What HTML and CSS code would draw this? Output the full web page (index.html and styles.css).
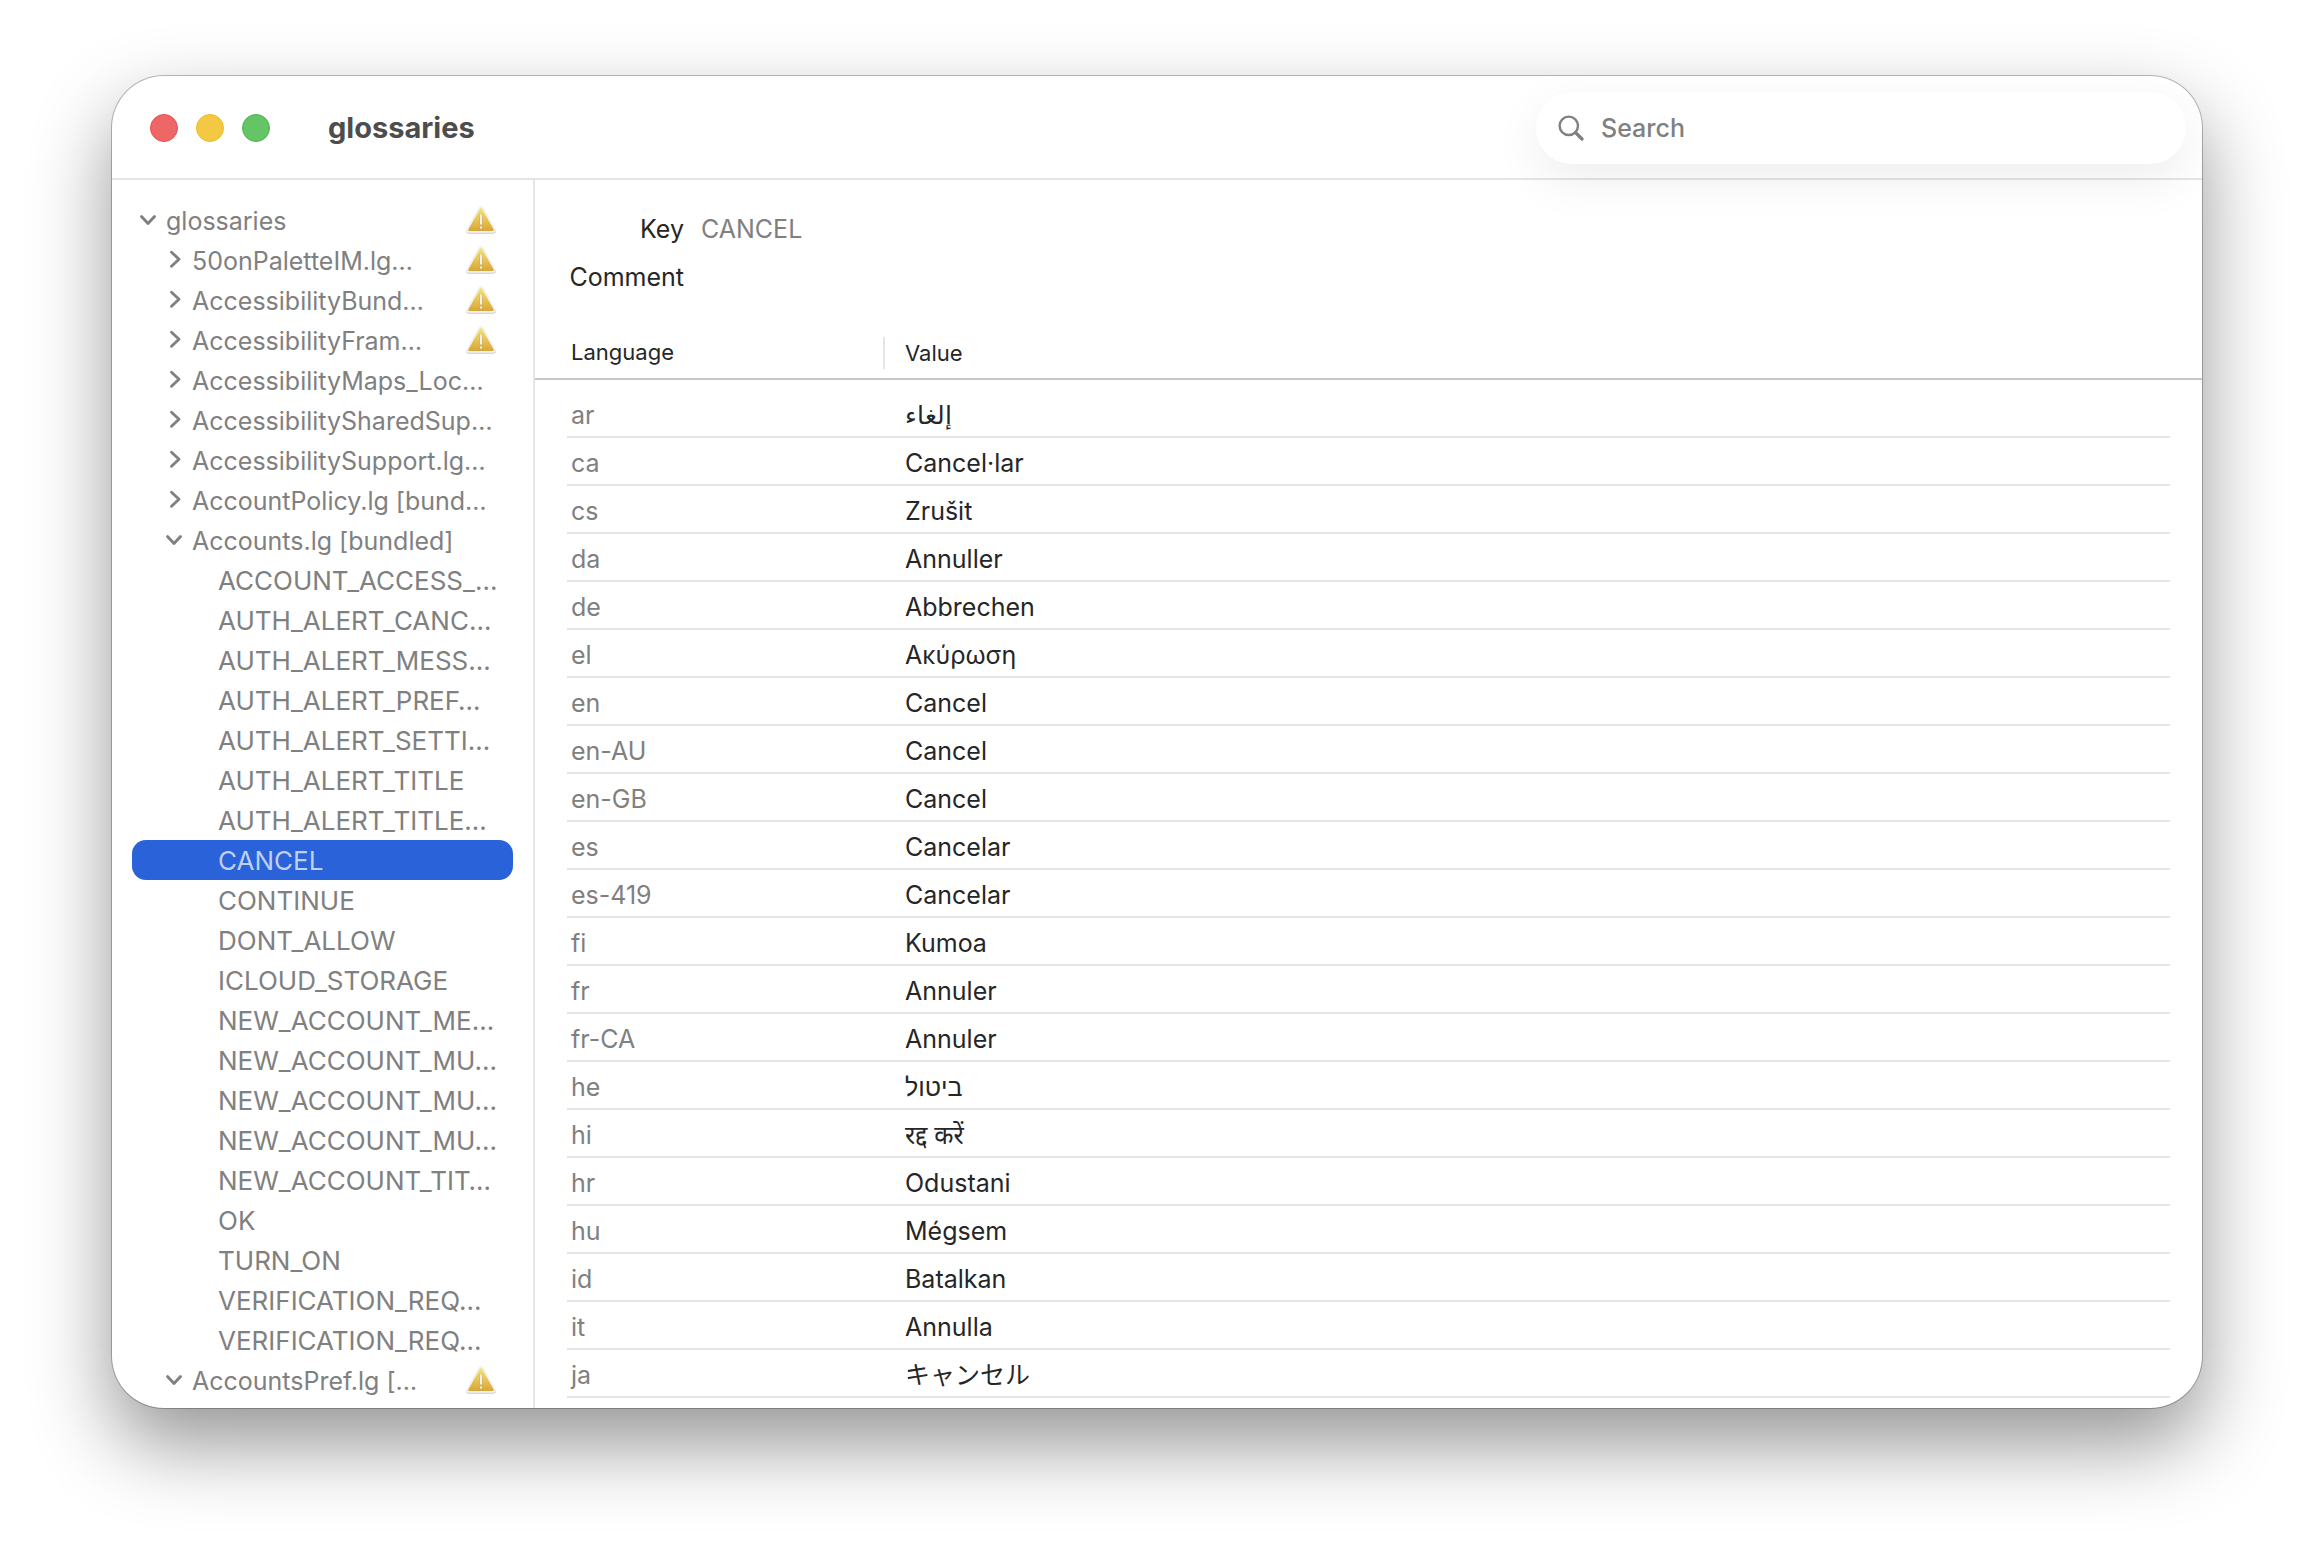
FILE: index.html
```html
<!DOCTYPE html>
<html lang="en">
<head>
    <meta charset="UTF-8">
    <meta name="viewport" content="width=device-width, initial-scale=1.0">
    <title>glossaries</title>
    <link rel="stylesheet" href="styles.css">
</head>
<body>
    <svg class="sprite" aria-hidden="true">
        <defs>
            <linearGradient id="warn-fill" x1="0" y1="0" x2="0" y2="1">
                <stop offset="0" stop-color="#f6e372"/>
                <stop offset="1" stop-color="#d9a83a"/>
            </linearGradient>
            <symbol id="chevron-down" viewBox="0 0 20 20">
                <path d="M3.500 6.500 L10 13.500 L16.500 6.500" fill="none" stroke="currentColor" stroke-width="2.900" stroke-linecap="round" stroke-linejoin="round"/>
            </symbol>
            <symbol id="chevron-right" viewBox="0 0 20 20">
                <path d="M7.500 2.200 L15 9.200 L7.500 16.200" fill="none" stroke="currentColor" stroke-width="2.900" stroke-linecap="round" stroke-linejoin="round"/>
            </symbol>
            <symbol id="warning" viewBox="0 0 32 32">
                <path d="M16 5.500 L28.300 27.200 H3.700 Z" fill="#cdcdcd" stroke="#cdcdcd" stroke-width="5" stroke-linejoin="round"/>
                <path d="M16 4.500 L28.300 26.200 H3.700 Z" fill="#f1f1f1" stroke="#f1f1f1" stroke-width="5" stroke-linejoin="round"/>
                <path d="M16 5 L27.800 26 H4.200 Z" fill="url(#warn-fill)" stroke="url(#warn-fill)" stroke-width="2" stroke-linejoin="round"/>
                <path d="M16 11.500 V19.500 M16 23.400 V23.600" stroke="#b99a48" stroke-width="3.200" stroke-linecap="round"/>
                <path d="M16 11.500 V19.500 M16 23.400 V23.600" stroke="#f6f1e0" stroke-width="2.400" stroke-linecap="round"/>
            </symbol>
        </defs>
    </svg>

    <div class="window">
        <header class="titlebar">
            <div class="lights">
                <button type="button" class="light close" aria-label="Close"></button>
                <button type="button" class="light minimize" aria-label="Minimize"></button>
                <button type="button" class="light zoom" aria-label="Zoom"></button>
            </div>
            <h1>glossaries</h1>
            <label class="search">
                <svg viewBox="0 0 28 28" aria-hidden="true">
                    <circle cx="11.800" cy="11.800" r="9.200" fill="none" stroke="currentColor" stroke-width="2.400"/>
                    <path d="M18.600 18.600 L25 25" stroke="currentColor" stroke-width="3.400" stroke-linecap="round"/>
                </svg>
                <input type="search" placeholder="Search" aria-label="Search">
            </label>
        </header>

        <div class="content">
            <nav class="sidebar">
                <ul class="tree">
                    <li class="root"><button type="button"><svg class="chevron"><use href="#chevron-down"/></svg><span>glossaries</span><svg class="warning"><use href="#warning"/></svg></button></li>
                    <li class="file"><button type="button"><svg class="chevron"><use href="#chevron-right"/></svg><span>50onPaletteIM.lg…</span><svg class="warning"><use href="#warning"/></svg></button></li>
                    <li class="file"><button type="button"><svg class="chevron"><use href="#chevron-right"/></svg><span>AccessibilityBund…</span><svg class="warning"><use href="#warning"/></svg></button></li>
                    <li class="file"><button type="button"><svg class="chevron"><use href="#chevron-right"/></svg><span>AccessibilityFram…</span><svg class="warning"><use href="#warning"/></svg></button></li>
                    <li class="file"><button type="button"><svg class="chevron"><use href="#chevron-right"/></svg><span>AccessibilityMaps_Loc…</span></button></li>
                    <li class="file"><button type="button"><svg class="chevron"><use href="#chevron-right"/></svg><span>AccessibilitySharedSup…</span></button></li>
                    <li class="file"><button type="button"><svg class="chevron"><use href="#chevron-right"/></svg><span>AccessibilitySupport.lg…</span></button></li>
                    <li class="file"><button type="button"><svg class="chevron"><use href="#chevron-right"/></svg><span>AccountPolicy.lg [bund…</span></button></li>
                    <li class="file"><button type="button"><svg class="chevron"><use href="#chevron-down"/></svg><span>Accounts.lg [bundled]</span></button></li>
                    <li class="key"><button type="button"><span>ACCOUNT_ACCESS_…</span></button></li>
                    <li class="key"><button type="button"><span>AUTH_ALERT_CANC…</span></button></li>
                    <li class="key"><button type="button"><span>AUTH_ALERT_MESS…</span></button></li>
                    <li class="key"><button type="button"><span>AUTH_ALERT_PREF…</span></button></li>
                    <li class="key"><button type="button"><span>AUTH_ALERT_SETTI…</span></button></li>
                    <li class="key"><button type="button"><span>AUTH_ALERT_TITLE</span></button></li>
                    <li class="key"><button type="button"><span>AUTH_ALERT_TITLE…</span></button></li>
                    <li class="key selected"><button type="button" aria-current="true"><span>CANCEL</span></button></li>
                    <li class="key"><button type="button"><span>CONTINUE</span></button></li>
                    <li class="key"><button type="button"><span>DONT_ALLOW</span></button></li>
                    <li class="key"><button type="button"><span>ICLOUD_STORAGE</span></button></li>
                    <li class="key"><button type="button"><span>NEW_ACCOUNT_ME…</span></button></li>
                    <li class="key"><button type="button"><span>NEW_ACCOUNT_MU…</span></button></li>
                    <li class="key"><button type="button"><span>NEW_ACCOUNT_MU…</span></button></li>
                    <li class="key"><button type="button"><span>NEW_ACCOUNT_MU…</span></button></li>
                    <li class="key"><button type="button"><span>NEW_ACCOUNT_TIT…</span></button></li>
                    <li class="key"><button type="button"><span>OK</span></button></li>
                    <li class="key"><button type="button"><span>TURN_ON</span></button></li>
                    <li class="key"><button type="button"><span>VERIFICATION_REQ…</span></button></li>
                    <li class="key"><button type="button"><span>VERIFICATION_REQ…</span></button></li>
                    <li class="file"><button type="button"><svg class="chevron"><use href="#chevron-down"/></svg><span>AccountsPref.lg […</span><svg class="warning"><use href="#warning"/></svg></button></li>
                </ul>
            </nav>

            <main class="detail">
                <dl class="info">
                    <dt>Key</dt>
                    <dd>CANCEL</dd>
                    <dt>Comment</dt>
                    <dd></dd>
                </dl>

                <table>
                    <thead>
                        <tr>
                            <th scope="col" class="language">Language</th>
                            <th scope="col"><span class="divided">Value</span></th>
                        </tr>
                    </thead>
                    <tbody>
                        <tr><td>ar</td><td lang="ar">إلغاء</td></tr>
                        <tr><td>ca</td><td>Cancel·lar</td></tr>
                        <tr><td>cs</td><td lang="cs">Zrušit</td></tr>
                        <tr><td>da</td><td lang="da">Annuller</td></tr>
                        <tr><td>de</td><td lang="de">Abbrechen</td></tr>
                        <tr><td>el</td><td lang="el">Ακύρωση</td></tr>
                        <tr><td>en</td><td lang="en">Cancel</td></tr>
                        <tr><td>en-AU</td><td lang="en-AU">Cancel</td></tr>
                        <tr><td>en-GB</td><td lang="en-GB">Cancel</td></tr>
                        <tr><td>es</td><td lang="es">Cancelar</td></tr>
                        <tr><td>es-419</td><td lang="es-419">Cancelar</td></tr>
                        <tr><td>fi</td><td lang="fi">Kumoa</td></tr>
                        <tr><td>fr</td><td lang="fr">Annuler</td></tr>
                        <tr><td>fr-CA</td><td lang="fr-CA">Annuler</td></tr>
                        <tr><td>he</td><td lang="he">ביטול</td></tr>
                        <tr><td>hi</td><td lang="hi">रद्द करें</td></tr>
                        <tr><td>hr</td><td lang="hr">Odustani</td></tr>
                        <tr><td>hu</td><td lang="hu">Mégsem</td></tr>
                        <tr><td>id</td><td lang="id">Batalkan</td></tr>
                        <tr><td>it</td><td lang="it">Annulla</td></tr>
                        <tr><td>ja</td><td lang="ja">キャンセル</td></tr>
                    </tbody>
                </table>
            </main>
        </div>
    </div>
</body>
</html>
```
FILE: styles.css
```css
* {
    margin: 0;
    padding: 0;
    box-sizing: border-box;
}

body {
    padding: 76px 112px 148px;
    background-color: #fff;
    color: #262626;
    font-family: Inter, "Noto Sans", "Noto Sans CJK JP", sans-serif;
    font-size: 25px;
    line-height: 40px;
}

button, input {
    font: inherit;
    color: inherit;
    border: none;
    background: none;
}

.sprite {
    position: absolute;
    width: 0;
    height: 0;
}

.window {
    border-radius: 52px;
    background-color: #fff;
    box-shadow: 0 0 0 1px rgba(0, 0, 0, 0.25), 0 36px 80px rgba(0, 0, 0, 0.42);
    overflow: hidden;
}

/* Title bar */

.titlebar {
    display: flex;
    align-items: center;
    height: 104px;
    padding: 2px 16px 0 38px;
    border-bottom: 2px solid #e5e5e5;
}

.lights {
    display: flex;
    gap: 18px;
}

.light {
    width: 28px;
    height: 28px;
    border-radius: 50%;
}

.close {
    background-color: #ee6666;
    border: 1px solid #e84f50;
}

.minimize {
    background-color: #f3c943;
    border: 1px solid #edbb26;
}

.zoom {
    background-color: #65c466;
    border: 1px solid #45b54a;
}

h1 {
    margin-left: 58px;
    color: #4d4d4d;
    font-size: 29px;
    font-weight: 700;
}

.search {
    display: flex;
    align-items: center;
    gap: 16px;
    width: 650px;
    height: 72px;
    margin-left: auto;
    padding: 0 21px;
    border-radius: 36px;
    background-color: #fff;
    box-shadow: 0 16px 50px rgba(0, 0, 0, 0.07);
    color: #808080;
    font-weight: 500;
}

.search svg {
    flex: none;
    width: 28px;
    height: 28px;
}

.search input {
    flex: 1;
    min-width: 0;
    outline: none;
}

.search input::placeholder {
    color: #808080;
}

.content {
    display: grid;
    grid-template-columns: 423px 1fr;
}

/* Sidebar */

.sidebar {
    padding: 20px 20px 8px;
    border-right: 2px solid #e5e5e5;
    color: #808080;
}

.tree {
    list-style: none;
}

.tree button {
    display: flex;
    align-items: center;
    width: 100%;
    height: 40px;
    padding-right: 16px;
    border-radius: 14px;
    text-align: left;
    white-space: nowrap;
}

.tree span {
    padding-top: 2px;
}

.root button {
    padding-left: 6px;
}

.file button {
    padding-left: 32px;
}

.key button {
    padding-left: 86px;
    font-size: 26px;
}

.chevron {
    flex: none;
    width: 20px;
    height: 20px;
    margin-right: 8px;
}

.warning {
    width: 32px;
    height: 32px;
    margin-left: auto;
}

.selected button {
    background-color: #2962d9;
    color: #bfd0f4;
}

/* Detail pane */

.info {
    display: grid;
    grid-template-columns: 149px 1fr;
    column-gap: 17px;
    padding: 25px 0 27px;
    line-height: 48px;
}

.info dt {
    text-align: right;
}

.info dd {
    color: #808080;
}

table {
    width: 100%;
    border-collapse: separate;
    border-spacing: 0;
    font-variant-ligatures: none;
}

th {
    height: 52px;
    border-bottom: 2px solid #c8c8c8;
    font-size: 22px;
    font-weight: 400;
    line-height: 32px;
    text-align: left;
}

.language {
    width: 348px;
    padding: 0 0 2px 36px;
}

.divided {
    display: block;
    padding-left: 20px;
    border-left: 2px solid #e5e5e5;
}

tbody::before {
    content: "";
    display: block;
    height: 10px;
}

/* Row rules stop short of the pane edges */
tbody tr {
    background: linear-gradient(#e5e5e5, #e5e5e5) bottom / calc(100% - 64px) 2px no-repeat;
}

td {
    height: 48px;
    padding: 2px 0 0 22px;
}

td:first-child {
    padding-left: 36px;
    color: #808080;
}
```
